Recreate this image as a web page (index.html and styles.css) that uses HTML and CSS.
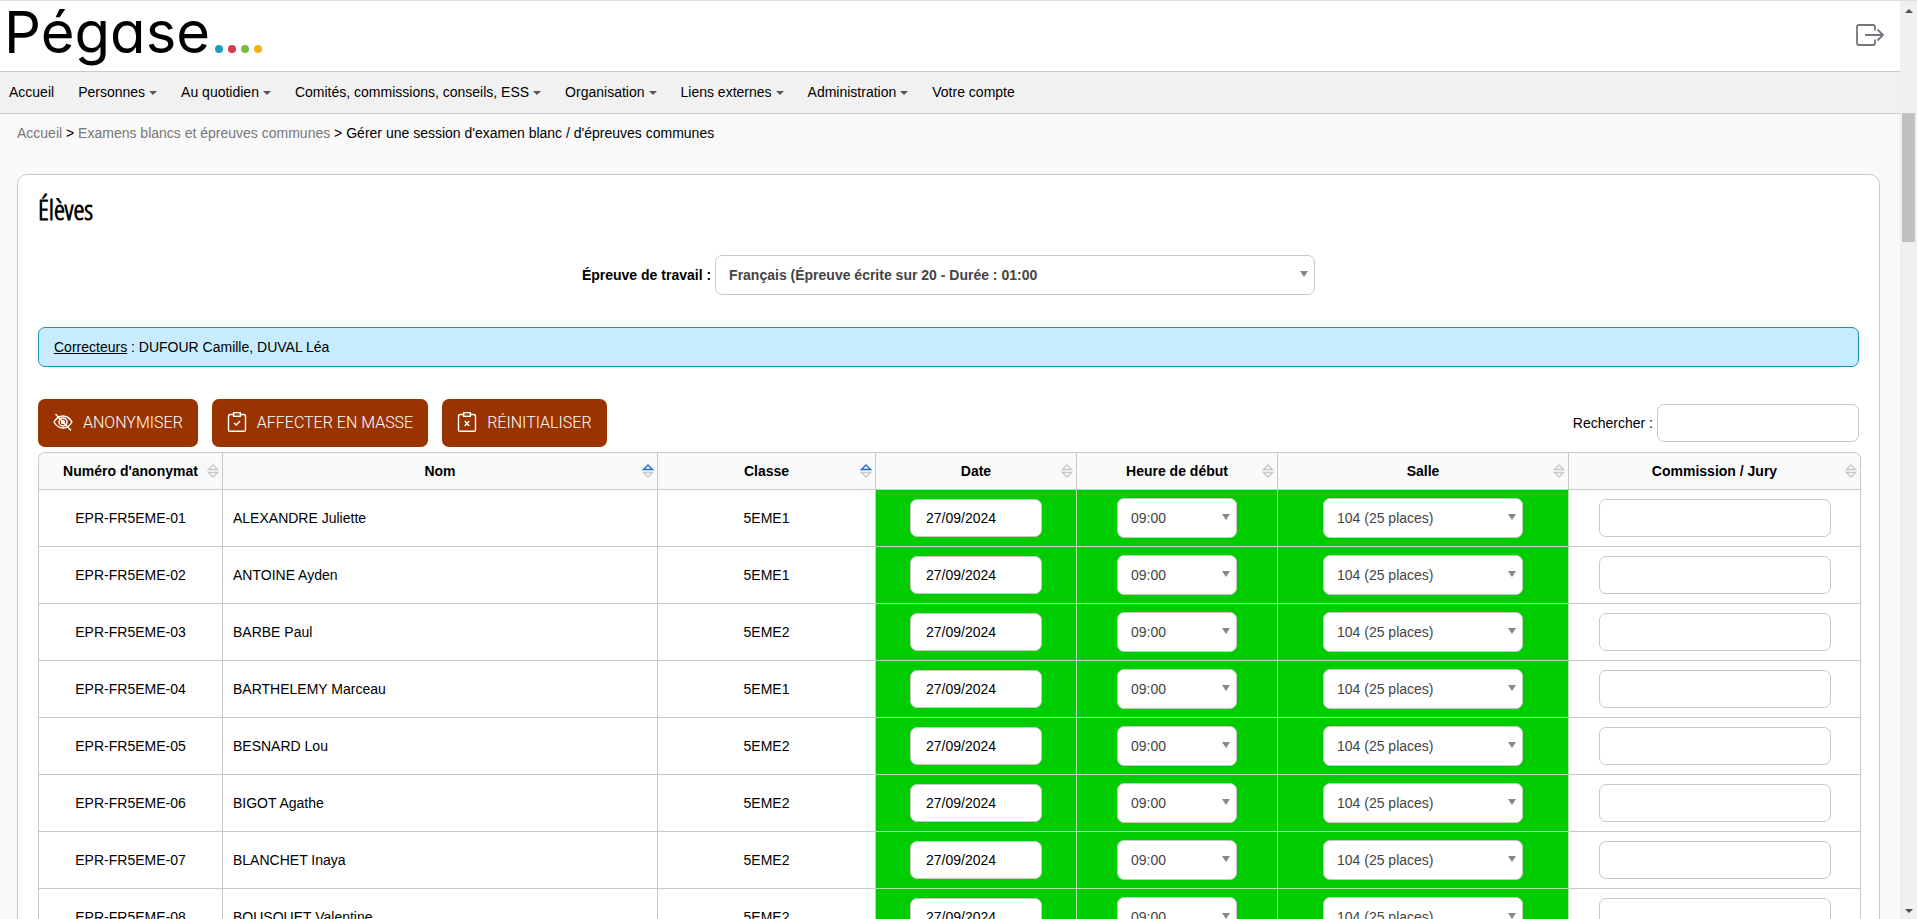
FILE: index.html
```html
<!DOCTYPE html>
<html lang="fr">
<head>
    <meta charset="UTF-8">
    <meta name="viewport" content="width=device-width, initial-scale=1.0">
    <title>Pégase - Examens blancs et épreuves communes</title>
    <link rel="stylesheet" href="styles.css">
</head>
<body>
    <div class="page">
        <header class="header">
            <a class="logo" href="#">
                <span class="logo-text">Pégase</span>
                <span class="logo-dots">
                    <i class="dot dot-blue"></i>
                    <i class="dot dot-red"></i>
                    <i class="dot dot-green"></i>
                    <i class="dot dot-yellow"></i>
                </span>
            </a>
            <a class="logout" href="#" aria-label="Déconnexion">
                <svg width="28" height="22" viewBox="0 0 28 22" fill="none" stroke="#74747c" stroke-width="1.8">
                    <path d="M19 6.500V3Q19 1 17 1H3Q1 1 1 3V19Q1 21 3 21H17Q19 21 19 19V15.500"/>
                    <path d="M9 11H27M21.500 5.500L27 11L21.500 16.500"/>
                </svg>
            </a>
        </header>

        <nav class="menu">
            <a href="#">Accueil</a>
            <a href="#" class="has-sub">Personnes</a>
            <a href="#" class="has-sub">Au quotidien</a>
            <a href="#" class="has-sub">Comités, commissions, conseils, ESS</a>
            <a href="#" class="has-sub">Organisation</a>
            <a href="#" class="has-sub">Liens externes</a>
            <a href="#" class="has-sub">Administration</a>
            <a href="#">Votre compte</a>
        </nav>

        <div class="breadcrumb">
            <a href="#">Accueil</a> &gt; <a href="#">Examens blancs et épreuves communes</a> &gt; <span>Gérer une session d'examen blanc / d'épreuves communes</span>
        </div>

        <main class="card">
            <h2>Élèves</h2>

            <div class="work-exam">
                <label for="epreuve">Épreuve de travail :</label>
                <select id="epreuve" class="select">
                    <option>Français (Épreuve écrite sur 20 - Durée : 01:00</option>
                </select>
            </div>

            <div class="info"><u>Correcteurs</u> : DUFOUR Camille, DUVAL Léa</div>

            <div class="toolbar">
                <button type="button" class="btn">
                    <svg width="20" height="20" viewBox="0 0 20 20" fill="none" stroke="#fff" stroke-width="1.4">
                        <path d="M1 10Q4.500 4 10 4T19 10Q15.500 16 10 16T1 10Z"/>
                        <circle cx="10" cy="10" r="4"/>
                        <circle cx="10" cy="10" r="1.500"/>
                        <path d="M2.500 2L18 18.500"/>
                    </svg>
                    ANONYMISER
                </button>
                <button type="button" class="btn">
                    <svg width="20" height="20" viewBox="0 0 20 20" fill="none" stroke="#fff" stroke-width="1.4">
                        <path d="M6.500 2.500H3Q1.500 2.500 1.500 4V18Q1.500 19.300 3 19.300H17Q18.500 19.300 18.500 18V4Q18.500 2.500 17 2.500H13.500"/>
                        <rect x="6.700" y="0.700" width="6.600" height="3.600"/>
                        <path d="M7 11L9.300 13L13 9"/>
                    </svg>
                    AFFECTER EN MASSE
                </button>
                <button type="button" class="btn">
                    <svg width="20" height="20" viewBox="0 0 20 20" fill="none" stroke="#fff" stroke-width="1.4">
                        <path d="M6.500 2.500H3Q1.500 2.500 1.500 4V18Q1.500 19.300 3 19.300H17Q18.500 19.300 18.500 18V4Q18.500 2.500 17 2.500H13.500"/>
                        <rect x="6.700" y="0.700" width="6.600" height="3.600"/>
                        <path d="M7.700 9L12.300 14M12.300 9L7.700 14"/>
                    </svg>
                    RÉINITIALISER
                </button>
                <div class="search">
                    <label for="recherche">Rechercher :</label>
                    <input type="search" id="recherche">
                </div>
            </div>

            <table class="students">
                <colgroup>
                    <col class="col-num">
                    <col class="col-nom">
                    <col class="col-classe">
                    <col class="col-date">
                    <col class="col-heure">
                    <col class="col-salle">
                    <col class="col-jury">
                </colgroup>
                <thead>
                    <tr>
                        <th>Numéro d'anonymat</th>
                        <th class="asc">Nom</th>
                        <th class="asc">Classe</th>
                        <th>Date</th>
                        <th>Heure de début</th>
                        <th>Salle</th>
                        <th>Commission / Jury</th>
                    </tr>
                </thead>
                <tbody id="students">
                    <!-- Lignes ajoutées par le script -->
                </tbody>
            </table>
        </main>
    </div>

    <div class="scrollbar" aria-hidden="true">
        <span class="arrow-up"></span>
        <span class="thumb"></span>
        <span class="arrow-down"></span>
    </div>

    <script>
        const eleves = [
            ['ALEXANDRE Juliette', '5EME1'],
            ['ANTOINE Ayden', '5EME1'],
            ['BARBE Paul', '5EME2'],
            ['BARTHELEMY Marceau', '5EME1'],
            ['BESNARD Lou', '5EME2'],
            ['BIGOT Agathe', '5EME2'],
            ['BLANCHET Inaya', '5EME2'],
            ['BOUSQUET Valentine', '5EME2']
        ];

        const sortIcon = `<svg class="sort" width="12" height="14" viewBox="0 0 12 14" fill="none">
            <path class="down" d="M1.500 8.500H10.500L6 13Z"/>
            <path class="up" d="M1.500 5.500H10.500L6 1Z"/>
        </svg>`;
        document.querySelectorAll('.students th').forEach(th => th.insertAdjacentHTML('beforeend', sortIcon));

        const tbody = document.getElementById('students');
        eleves.forEach(([nom, classe], i) => {
            const num = 'EPR-FR5EME-' + String(i + 1).padStart(2, '0');
            tbody.insertAdjacentHTML('beforeend', `
                <tr>
                    <td>${num}</td>
                    <td class="name">${nom}</td>
                    <td>${classe}</td>
                    <td class="ok"><input type="text" class="date" value="27/09/2024" aria-label="Date ${nom}"></td>
                    <td class="ok"><select class="select heure" aria-label="Heure ${nom}"><option>09:00</option></select></td>
                    <td class="ok"><select class="select salle" aria-label="Salle ${nom}"><option>104 (25 places)</option></select></td>
                    <td><input type="text" class="jury" aria-label="Commission ${nom}"></td>
                </tr>`);
        });
    </script>
</body>
</html>
```
FILE: styles.css
```css
* {
    box-sizing: border-box;
}
body {
    margin: 0;
    height: 100vh;
    overflow: hidden;
    display: flex;
    background-color: #f9f9f9;
    color: #000;
    font-family: Arial, "Liberation Sans", sans-serif;
    font-size: 14px;
    line-height: 20px;
}
a {
    color: inherit;
    text-decoration: none;
}
.page {
    flex: 1;
    min-width: 0;
}

/* En-tête */
.header {
    display: flex;
    justify-content: space-between;
    align-items: center;
    height: 71px;
    padding: 0 16px 2px 4px;
    border-top: 1px solid #dedede;
    background-color: #fff;
}
.logo {
    display: flex;
    align-items: baseline;
    gap: 5px;
    padding-bottom: 6px;
}
.logo-text {
    font-family: Inter, sans-serif;
    font-size: 58px;
    font-weight: 400;
    line-height: 64px;
    font-feature-settings: "cv11";
}
.logo-dots {
    display: flex;
    gap: 5px;
}
.dot {
    width: 8px;
    height: 8px;
    border-radius: 50%;
}
.dot-blue {
    background-color: #1b9fb8;
}
.dot-red {
    background-color: #d93a4c;
}
.dot-green {
    background-color: #73bb45;
}
.dot-yellow {
    background-color: #f2b40f;
}
.logout svg {
    display: block;
}

/* Menu */
.menu {
    display: flex;
    gap: 24px;
    padding: 10px 9px 11px;
    border-top: 1px solid #c8c8c8;
    border-bottom: 1px solid #c8c8c8;
    background-color: #f1f1f1;
}
.has-sub::after {
    content: "";
    display: inline-block;
    margin-left: 4px;
    border: 4px solid transparent;
    border-top-color: #555;
    border-bottom: 0;
    vertical-align: 2px;
}
.breadcrumb {
    padding: 9px 17px;
}
.breadcrumb a {
    color: #777;
}

/* Contenu */
.card {
    margin: 22px 20px 0 17px;
    padding: 14px 20px;
    border: 1px solid #c8c8c8;
    border-radius: 10px;
    background-color: #fff;
}
h2 {
    margin: 0 0 26px;
    font-family: "Open Sans Condensed Light", "Open Sans Condensed", sans-serif;
    font-size: 28px;
    font-weight: bold;
    line-height: 40px;
}
input,
.select {
    height: 38px;
    padding: 0 15px;
    border: 1px solid #c8c8c8;
    border-radius: 7px;
    background-color: #fff;
    color: #000;
    font: inherit;
}
.select {
    appearance: none;
    height: 40px;
    padding: 0 13px;
    color: #444;
    background-image: url("data:image/svg+xml,%3Csvg xmlns='http://www.w3.org/2000/svg' width='8' height='6'%3E%3Cpath d='M0 0H8L4 6Z' fill='%23888'/%3E%3C/svg%3E");
    background-position: right 6px top 15px;
    background-repeat: no-repeat;
}
.work-exam {
    display: flex;
    justify-content: center;
    align-items: center;
    gap: 4px;
    margin-bottom: 32px;
    font-weight: bold;
}
.work-exam .select {
    width: 600px;
}
.info {
    padding: 9px 15px;
    border: 1px solid #2190c0;
    border-radius: 7px;
    background-color: #c7ebff;
}
.toolbar {
    display: flex;
    align-items: center;
    gap: 14px;
    margin: 32px 0 5px;
}
.btn {
    display: flex;
    align-items: center;
    gap: 10px;
    height: 48px;
    padding: 0 15px 2px;
    border: none;
    border-radius: 7px;
    background-color: #993300;
    color: #fff;
    font-family: Roboto, sans-serif;
    font-size: 16px;
    font-weight: 300;
    cursor: pointer;
}
.search {
    display: flex;
    align-items: center;
    gap: 4px;
    margin-left: auto;
}
.search input {
    width: 202px;
}

/* Tableau des élèves */
.students {
    width: calc(100% + 2px);
    table-layout: fixed;
    border-collapse: separate;
    border-spacing: 0;
    border-left: 1px solid #c8c8c8;
    border-top: 1px solid #c8c8c8;
    border-radius: 7px 7px 0 0;
}
.col-num {
    width: 184px;
}
.col-nom {
    width: 435px;
}
.col-classe {
    width: 218px;
}
.col-date,
.col-heure {
    width: 201px;
}
.col-salle {
    width: 291px;
}
.students th,
.students td {
    padding: 0;
    border-right: 1px solid #c8c8c8;
    border-bottom: 1px solid #c8c8c8;
    text-align: center;
    vertical-align: middle;
}
.students th {
    position: relative;
    height: 37px;
    background-color: #f9fafc;
}
.students th:first-child {
    border-top-left-radius: 6px;
}
.students th:last-child {
    border-top-right-radius: 6px;
}
.students td {
    height: 57px;
}
.students td.name {
    padding-left: 10px;
    text-align: left;
}
.students td.ok {
    background-color: #00cc00;
    border-color: #b3dfb3;
}
.sort {
    position: absolute;
    top: 11px;
    right: 3px;
    stroke: #c8c8c8;
    stroke-width: 1.3;
}
.asc .up {
    stroke: #1b6ec2;
}
.date {
    width: 132px;
}
.heure {
    width: 120px;
}
.salle {
    width: 200px;
}
.jury {
    width: 232px;
}

/* Barre de défilement */
.scrollbar {
    display: flex;
    flex-direction: column;
    align-items: center;
    width: 17px;
    padding: 8px 0 6px;
    border-top: 1px solid #dedede;
    background-color: #f0f0f0;
}
.arrow-up,
.arrow-down {
    border: 4px solid transparent;
}
.arrow-up {
    border-top: 0;
    border-bottom-color: #505050;
}
.arrow-down {
    margin-top: auto;
    border-bottom: 0;
    border-top-color: #505050;
}
.thumb {
    width: 13px;
    height: 129px;
    margin-top: 100px;
    background-color: #c1c1c1;
}
```
